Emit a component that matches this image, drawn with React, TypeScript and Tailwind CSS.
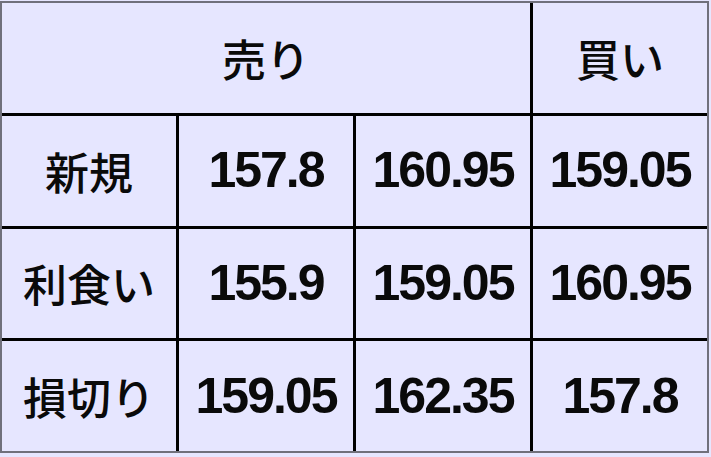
import { Fragment } from 'react'

const rows = [
  { label: '新規', values: ['157.8', '160.95', '159.05'] },
  { label: '利食い', values: ['155.9', '159.05', '160.95'] },
  { label: '損切り', values: ['159.05', '162.35', '157.8'] },
]

const jp = "font-['Noto_Sans_CJK_JP',sans-serif] font-medium text-[44px] text-[#0a0a0a]"
const num = "font-['Liberation_Sans',Arial,sans-serif] font-bold text-[50px] tracking-[-2px] text-[#0a0a0a]"

export default function App() {
  return (
    <div className="w-[711px] h-[457px] bg-[#e6e6ff] pt-[1px] pr-[2px] pb-[4px]">
      <div className="h-full border-2 border-[#70707c] bg-black grid grid-cols-4 grid-rows-4 gap-[3px]">
        <div className={`col-span-3 bg-[#e6e6ff] flex items-center justify-center ${jp}`}>売り</div>
        <div className={`bg-[#e6e6ff] flex items-center justify-center ${jp}`}>買い</div>
        {rows.map((r) => (
          <Fragment key={r.label}>
            <div className={`bg-[#e6e6ff] flex items-center justify-center ${jp}`}>{r.label}</div>
            {r.values.map((v, i) => (
              <div key={i} className={`bg-[#e6e6ff] flex items-center justify-center ${num}`}>{v}</div>
            ))}
          </Fragment>
        ))}
      </div>
    </div>
  )
}
